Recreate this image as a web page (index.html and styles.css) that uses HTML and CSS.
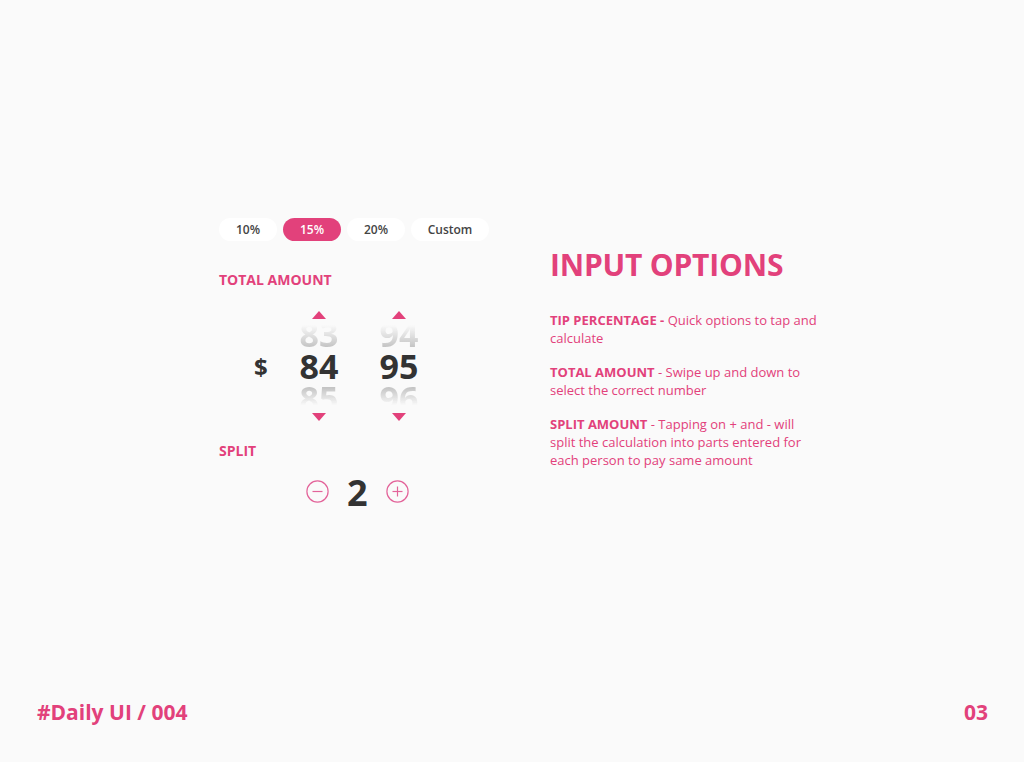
FILE: index.html
```html
<!DOCTYPE html>
<html>
<head>
<meta charset="utf-8">
<link rel="stylesheet" href="styles.css">
</head>
<body>
<div class="page">
  <main class="stage">
    <section class="calc">
      <div class="pills">
        <span class="pill">10%</span>
        <span class="pill active">15%</span>
        <span class="pill">20%</span>
        <span class="pill wide">Custom</span>
      </div>
      <div class="label total-label">TOTAL AMOUNT</div>
      <div class="picker">
        <span class="currency">$</span>
        <div class="wheel">
          <span class="tri up"></span>
          <span class="num prev">83</span>
          <span class="num cur">84</span>
          <span class="num next">85</span>
          <span class="tri down"></span>
        </div>
        <div class="wheel">
          <span class="tri up"></span>
          <span class="num prev">94</span>
          <span class="num cur">95</span>
          <span class="num next">96</span>
          <span class="tri down"></span>
        </div>
      </div>
      <div class="label split-label">SPLIT</div>
      <div class="split">
        <svg class="circ" width="23" height="23" viewBox="0 0 23 23"><circle cx="11.5" cy="11.5" r="10.6" fill="none" stroke="#e3649a" stroke-width="1.2"/><line x1="6.5" y1="11.5" x2="16.5" y2="11.5" stroke="#e3649a" stroke-width="1.2"/></svg>
        <span class="count">2</span>
        <svg class="circ" width="23" height="23" viewBox="0 0 23 23"><circle cx="11.5" cy="11.5" r="10.6" fill="none" stroke="#e3649a" stroke-width="1.2"/><line x1="6.5" y1="11.5" x2="16.5" y2="11.5" stroke="#e3649a" stroke-width="1.2"/><line x1="11.5" y1="6.5" x2="11.5" y2="16.5" stroke="#e3649a" stroke-width="1.2"/></svg>
      </div>
    </section>
    <section class="info">
      <h1 class="title">INPUT OPTIONS</h1>
      <p class="desc"><b>TIP PERCENTAGE -</b> Quick options to tap and calculate</p>
      <p class="desc"><b>TOTAL AMOUNT</b> - Swipe up and down to select the correct number</p>
      <p class="desc"><b>SPLIT AMOUNT</b> - Tapping on + and - will split the calculation into parts entered for each person to pay same amount</p>
    </section>
  </main>
  <footer class="footer">
    <span>#Daily UI / 004</span>
    <span>03</span>
  </footer>
</div>
</body>
</html>
```

FILE: styles.css
```css
html, body {
  margin: 0;
  padding: 0;
  background: #fafafa;
}
body {
  font-family: "Open Sans", "Liberation Sans", sans-serif;
  color: #333;
}
.page {
  width: 1024px;
  height: 762px;
  display: flex;
  flex-direction: column;
}
.stage {
  flex: 1;
  display: flex;
  padding: 218px 0 0 219px;
  gap: 61px;
}
.calc {
  width: 270px;
  display: flex;
  flex-direction: column;
}
.pills {
  display: flex;
  gap: 6px;
}
.pill {
  width: 58px;
  height: 23px;
  border-radius: 12px;
  background: #fff;
  font-size: 12px;
  font-weight: 600;
  color: #444;
  display: flex;
  align-items: center;
  justify-content: center;
}
.pill.wide { width: 78px; }
.pill.active {
  background: #e2417b;
  color: #fff;
}
.label {
  font-size: 14px;
  line-height: 18px;
  font-weight: 700;
  color: #e2417b;
}
.total-label { margin-top: 30px; }
.picker {
  margin-top: 22px;
  display: flex;
  align-items: center;
  padding-left: 35px;
}
.currency {
  font-size: 24px;
  font-weight: 700;
  color: #333;
  width: 14px;
  margin-right: 31px;
}
.wheel {
  width: 40px;
  display: flex;
  flex-direction: column;
  align-items: center;
  margin-right: 40px;
}
.tri {
  width: 0;
  height: 0;
  border-left: 7px solid transparent;
  border-right: 7px solid transparent;
}
.tri.up { border-bottom: 8px solid #e2417b; }
.tri.down { border-top: 8px solid #e2417b; margin-top: -1px; }
.num {
  font-size: 34px;
  font-weight: 700;
  line-height: 31px;
  color: #333;
}
.num.cur { line-height: 33px; }
.num.prev {
  color: transparent;
  background: linear-gradient(to bottom, rgba(250,250,250,0) 20%, #c4c4c4 90%);
  -webkit-background-clip: text;
  background-clip: text;
}
.num.next {
  color: transparent;
  background: linear-gradient(to bottom, #c4c4c4 15%, rgba(250,250,250,0) 72%);
  -webkit-background-clip: text;
  background-clip: text;
}
.split-label { margin-top: 21px; }
.split {
  margin-top: 16px;
  display: flex;
  align-items: center;
  padding-left: 87px;
  gap: 18px;
  height: 31px;
}
.circ { display: block; }
.count {
  font-size: 36px;
  font-weight: 700;
  line-height: 31px;
  color: #333;
  position: relative;
  top: 1px;
}
.info {
  width: 270px;
  padding-top: 27px;
}
.title {
  margin: 0;
  font-size: 30px;
  line-height: 40px;
  font-weight: 700;
  letter-spacing: -0.2px;
  color: #e2417b;
}
.desc {
  margin: 0;
  font-size: 13px;
  line-height: 18px;
  color: #e2417b;
}
.desc b { font-weight: 700; }
.title + .desc { margin-top: 26px; }
.desc + .desc { margin-top: 16px; }
.footer {
  display: flex;
  justify-content: space-between;
  padding: 0 36px 38px 37px;
  font-size: 21px;
  line-height: 24px;
  font-weight: 700;
  color: #e2417b;
}
```
